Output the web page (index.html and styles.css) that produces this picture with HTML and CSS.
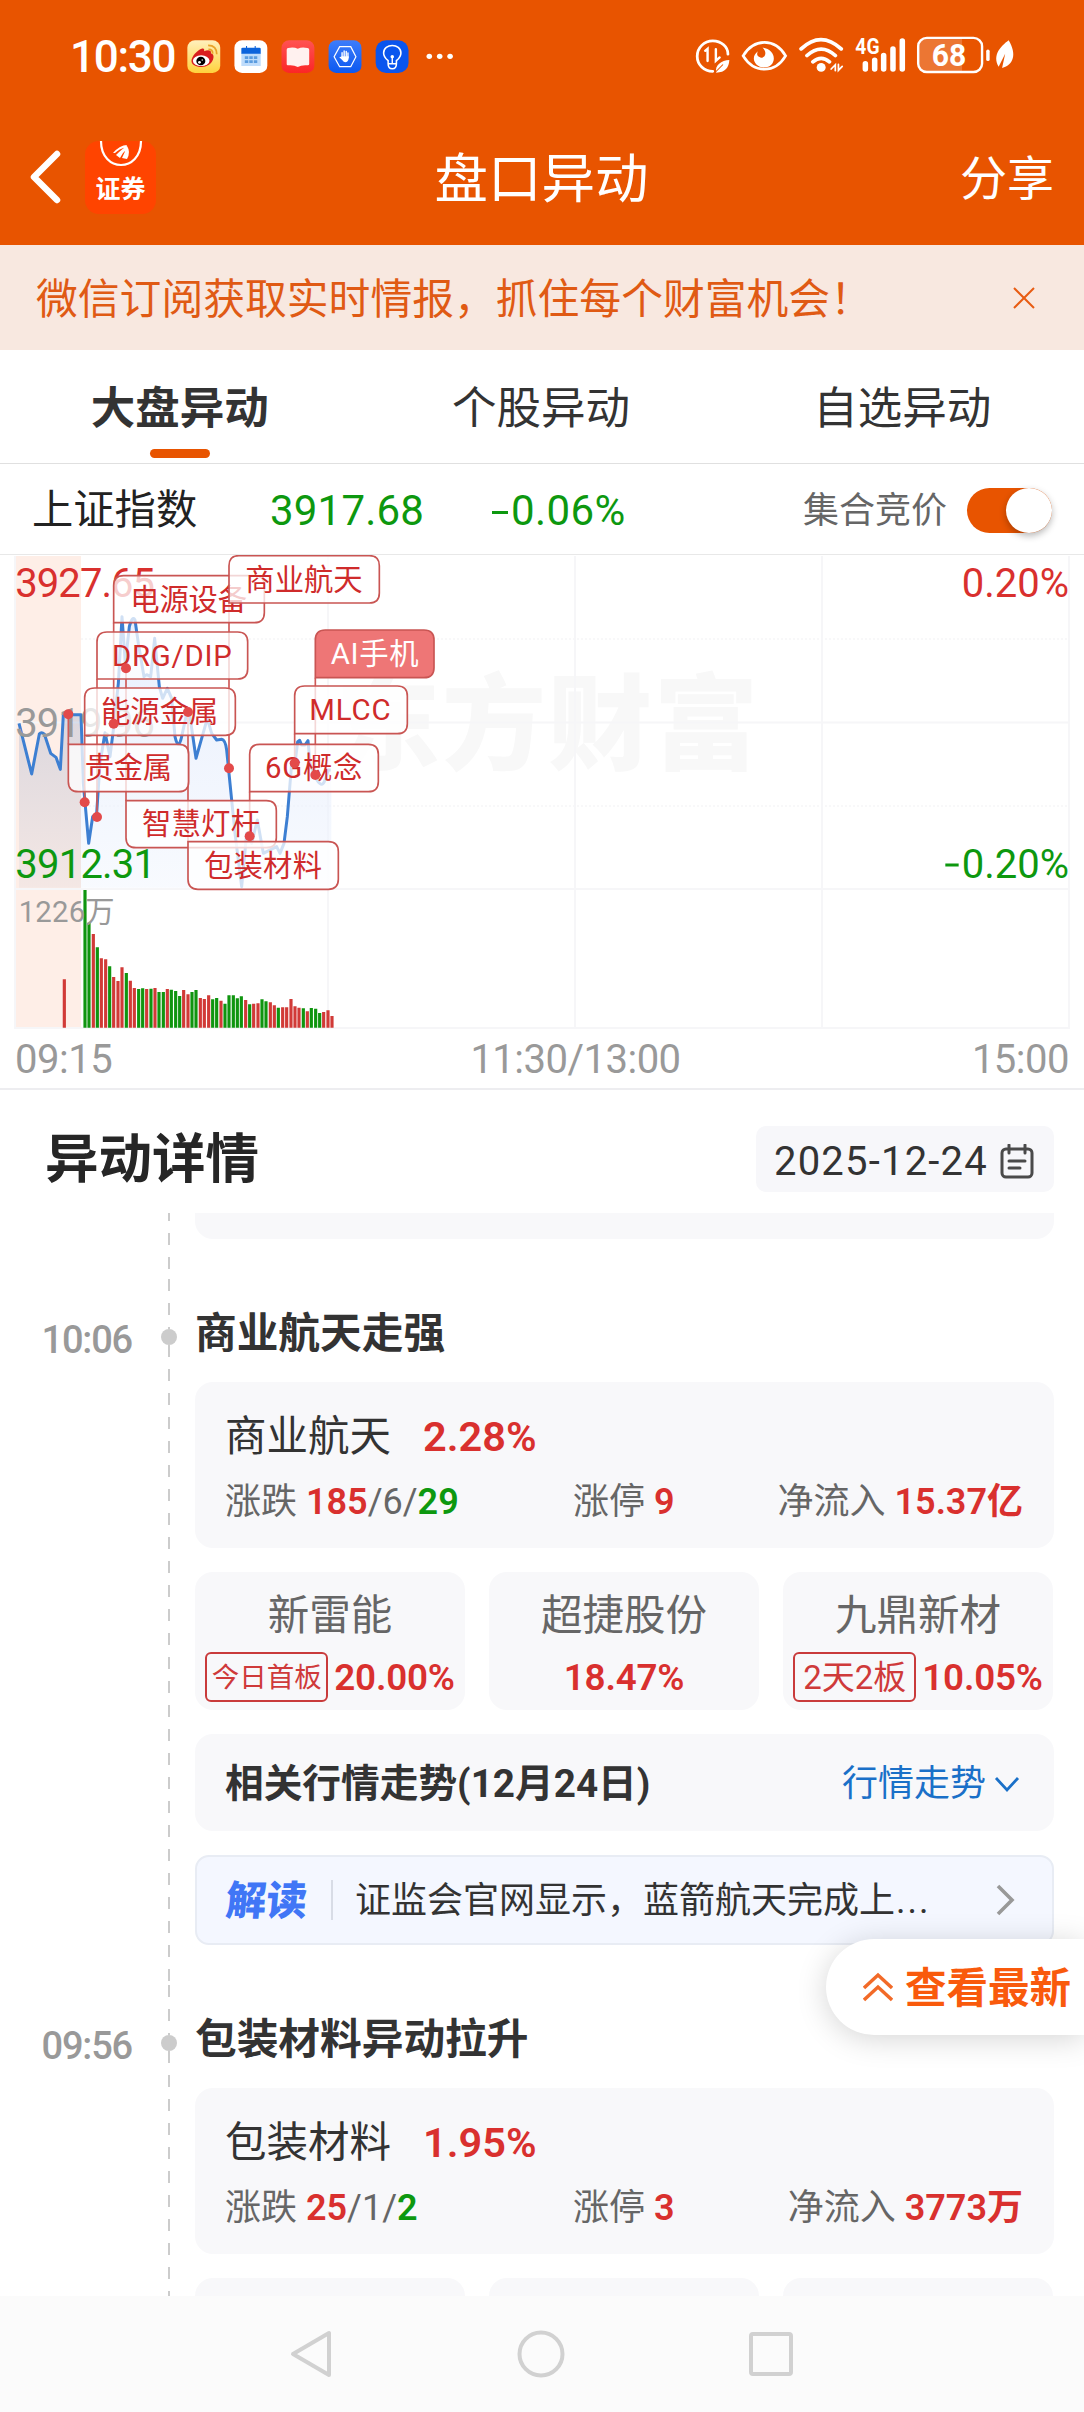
FILE: index.html
```html
<!DOCTYPE html>
<html lang="zh-CN">
<head>
<meta charset="utf-8">
<title>盘口异动</title>
<link rel="stylesheet" href="styles.css">
</head>
<body>
<div class="screen">
  <header class="header">
    <div class="status">
      <span class="clock">10:30</span>
      <svg class="apps" viewBox="540 110 780 120" preserveAspectRatio="none">
        <defs>
          <linearGradient id="gy" x2="0" y2="1"><stop stop-color="#fff0bd"/><stop offset="1" stop-color="#ffd23c"/></linearGradient>
          <linearGradient id="gr" x2="0" y2="1"><stop stop-color="#ff5252"/><stop offset="1" stop-color="#fb2626"/></linearGradient>
          <linearGradient id="gb" x2="0" y2="1"><stop stop-color="#3d7dfb"/><stop offset="1" stop-color="#0c58f0"/></linearGradient>
        </defs>
        <rect x="541" y="120" width="95" height="98" rx="22" fill="url(#gy)"/>
        <path d="M553 182c0-14 16-32 29-37 8-3 9 3 7 8 10-5 23-5 20 6 9 3 9 12 6 19-5 13-18 21-33 22-17 0-29-7-29-18z" fill="#d91e1e"/>
        <ellipse cx="581" cy="181" rx="24" ry="16" fill="#fff"/>
        <circle cx="580" cy="182" r="13" fill="#000"/><circle cx="576" cy="186" r="4" fill="#fff"/><circle cx="584" cy="179" r="2" fill="#fff"/>
        <path d="M601 135q25 0 25 27M602 147q13 0 12 13" fill="none" stroke="#e9a32a" stroke-width="5"/>
        <rect x="677" y="120" width="95" height="98" rx="22" fill="#fff"/>
        <path d="M697 158h56v39h-56z" fill="#bfdcfb"/><path d="M697 145q0-3 4-3h48q4 0 4 3v15h-56z" fill="#0b63dc"/>
        <path d="M712 137v12M737 137v12" stroke="#0b63dc" stroke-width="3"/>
        <path d="M707 168h10v8h-10zm13 0h10v8h-10zm13 0h10v8h-10zM707 180h10v8h-10zm13 0h10v8h-10zm13 0h10v8h-10z" fill="#5b9cdf"/>
        <rect x="813" y="120" width="95" height="98" rx="22" fill="url(#gr)"/>
        <path d="M828 148q0-5 4-5 16-4 28 2 12-6 28-2 5 0 5 5v43q0 4-4 4-18-2-29 5-11-7-29-5-3 0-3-4z" fill="#fff1ef"/>
        <rect x="949" y="120" width="95" height="98" rx="22" fill="url(#gb)"/>
        <path d="M981 139h32l15 30-15 30h-32l-16-30z" fill="none" stroke="#fff" stroke-width="3.5"/>
        <path d="M988 170v-13M994 168v-16M1000 168v-15M1005 172v-14" stroke="#fff" stroke-width="4" stroke-linecap="round"/>
        <path d="M986 168h21q1 17-9 18-6 0-9-6l-9-9q3-3 6 0z" fill="#fff"/>
        <rect x="1085" y="120" width="95" height="98" rx="30" fill="#0a55ee"/>
        <path d="M1121 190v-9c-6-5-13-12-13-23 0-30 50-30 50 0 0 11-7 18-13 23v9q0 15-12 15t-12-15zM1121 190h24" fill="none" stroke="#fff" stroke-width="4.5"/>
        <path d="M1133 188v-16" stroke="#fff" stroke-width="4"/><circle cx="1133" cy="169" r="5" fill="#fff"/>
        <g fill="#fff"><circle cx="1240" cy="168" r="8"/><circle cx="1270" cy="168" r="8"/><circle cx="1300" cy="168" r="8"/></g>
      </svg>
      <svg class="signals" viewBox="430 100 950 130" preserveAspectRatio="none" fill="none" stroke="#fff" stroke-linecap="round">
        <path d="M493 216c-25 0-45-20-45-46s20-46 45-46 44 18 44 40" stroke-width="8"/>
        <path d="M471 154l7-6v37M502 149v35l11-10" stroke-width="7"/>
        <path d="M503 220c-5-22 15-37 38-38-1 22-12 38-38 38z" fill="#fff" stroke="none"/>
        <path d="M501 218l21-22" stroke="#e85400" stroke-width="3"/>
        <path d="M581 169c32-54 92-54 123 0-31 54-91 54-123 0z" stroke-width="8"/>
        <path d="M637 144c15 14 8 34-6 30-11-3-11-13-7-19-24 18-9 49 18 49 35 0 41-52-5-60z" fill="#fff" stroke="none"/>
        <path d="M749 148q57-56 116 0M766 168q41-39 82 0M783 187q24-21 48 0" stroke-width="11"/>
        <circle cx="807" cy="204" r="13" fill="#fff" stroke="none"/>
        <path d="M836 209l12-13v18M857 195v18l11-12" stroke-width="5"/>
        <path d="M935 193v16M962 182v27M988 168v41M1015 148v61M1042 124v85" stroke-width="16"/>
        <text x="906" y="165" class="net" textLength="70" lengthAdjust="spacingAndGlyphs">4G</text>
        <path d="M1089 141q0-23 22-23h104v98h-104q-22 0-22-23z" fill="#fff" fill-opacity=".2" stroke="none"/>
        <rect x="1088" y="115" width="185" height="103" rx="25" stroke-width="7"/>
        <path d="M1290 155v25" stroke-width="10"/>
        <text x="1127" y="201" class="charge" textLength="100" lengthAdjust="spacingAndGlyphs">68</text>
        <path d="M1350 122c-23 18-48 45-29 80l19-39-9 43c34-10 43-42 19-84z" fill="#fff" stroke="none"/>
      </svg>
    </div>
    <div class="titlebar">
      <div class="titlebar-left">
        <svg class="back" width="32" height="54" viewBox="0 0 32 54"><path d="M28 4L5 27l23 23" fill="none" stroke="#fff" stroke-width="6.5" stroke-linecap="round" stroke-linejoin="round"/></svg>
        <div class="appicon">
          <svg width="44" height="27" viewBox="0 0 44 27" fill="none" stroke="#fff"><path d="M2 0c0 32 40 32 40 0" stroke-width="2.200"/><path d="M14 12Q21 4 28 4l-1 2Q20 8 16 12z M17 14Q24 7 28 5l1 2Q24 11 21 17z M23 17Q26 11 28 5q4 6 0 13z" fill="#fff" stroke="none"/></svg>
          <span>证券</span>
        </div>
      </div>
      <h1>盘口异动</h1>
      <span class="share">分享</span>
    </div>
  </header>

  <div class="notice">
    <span>微信订阅获取实时情报，抓住每个财富机会！</span>
    <svg width="22" height="22" viewBox="0 0 22 22"><path d="M1 1l20 20M21 1L1 21" stroke="#e85c13" stroke-width="2"/></svg>
  </div>

  <nav class="tabs">
    <span class="tab active">大盘异动</span>
    <span class="tab">个股异动</span>
    <span class="tab">自选异动</span>
  </nav>

  <div class="index">
    <span class="index-name">上证指数</span>
    <span class="index-value">3917.68</span>
    <span class="index-change"><i class="minus"></i>0.06%</span>
    <span class="auction">集合竞价</span>
    <span class="toggle"></span>
  </div>

  <section class="chart">
    <svg class="plot" viewBox="0 555 1084 475">
      <defs>
        <linearGradient id="area" x2="0" y2="1"><stop stop-color="#d9e4fb"/><stop offset="1" stop-color="#f3f7fe"/></linearGradient>
        <linearGradient id="tint" x2="0" y2="1"><stop stop-color="#6f8fc0" stop-opacity=".24"/><stop offset="1" stop-color="#6f8fc0" stop-opacity=".07"/></linearGradient>
      </defs>
      <text x="336" y="762" class="mark" textLength="422">东方财富</text>
      <path d="M16 556h65v332H16zM16 890h65v138H16z" fill="#feeee7"/>
      <g stroke="#f6f6f8" stroke-width="2" fill="none">
        <path d="M15 556v473M328 556v473M575 556v473M822 556v473M1069 556v473M15 722.500h1054M15 889h1054M15 1028h1054"/>
        <path d="M81 639h988M81 806h988" stroke-dasharray="2 2" stroke-width="1.500"/>
      </g>
      <g transform="translate(0 550) scale(.33333)">
        <path d="M57 520L95 672 122 548 133 552 152 610 168 622 181 658 190 494H243V1013H57z" fill="url(#tint)"/>
        <path d="M243 494L250 700 266 880 278 800 290 790 300 640 315 548 330 620 340 540 355 400 366 200 376 340 388 230 398 205 405 210 415 280 432 380 452 380 464 265 478 410 488 445 502 415 515 445 525 560 535 590 545 560 560 490 570 500 588 625 622 505 635 550 650 570 665 568 680 600 690 700 705 850 725 1010 740 850 755 880 772 810 790 910 830 890 840 910 852 880 862 800 875 640 885 640 893 575 905 580 924 572 930 640 945 680 965 705 975 690 985 660H994V1013H243z" fill="url(#area)" fill-opacity=".6"/>
        <path d="M57 520L95 672 118 552Q124 544 133 552L152 610 168 622 181 658 190 494H243L250 700 266 880 278 800 290 790 300 640 315 548 330 620 340 540 355 400 366 200 376 340 388 230Q397 195 405 210L415 280 432 380 440 374 452 380 464 265 478 410 488 445 502 415 515 445 525 560Q535 605 545 560L560 490 570 500 588 625 622 505 635 550 650 570 665 568Q676 570 680 600L690 700 705 850 725 1010 740 850 755 880 772 810 790 910 830 890 840 910 852 880 862 800 875 640 885 640 893 575 899 571 905 585 915 585 924 572 930 640 945 680Q965 720 975 690L985 660H992" fill="none" stroke="#3d7fd2" stroke-width="9" stroke-linejoin="round"/>
        <g stroke-width="9.500" fill="none">
          <path class="up" d="M193 1433V1288M280 1433V1152M304 1433V1225M317 1433V1228M341 1433V1281M354 1433V1293M366 1433V1252M391 1433V1292M403 1433V1314M440 1433V1317M465 1433V1314M502 1433V1317M551 1433V1320M564 1433V1333M601 1433V1344M613 1433V1347M626 1433V1336M663 1433V1352M737 1433V1350M761 1433V1361M774 1433V1360M811 1433V1357M823 1433V1366M848 1433V1372M860 1433V1372M873 1433V1347M885 1433V1369M897 1433V1373M922 1433V1384M971 1433V1386M984 1433V1381M996 1433V1398"/>
          <path class="down" d="M255 1433V1020M267 1433V1118M292 1433V1192M329 1433V1249M379 1433V1269M416 1433V1317M428 1433V1315M453 1433V1316M477 1433V1326M490 1433V1326M514 1433V1319M527 1433V1323M539 1433V1338M576 1433V1326M588 1433V1320M638 1433V1348M650 1433V1344M675 1433V1361M687 1433V1336M700 1433V1336M712 1433V1345M724 1433V1339M749 1433V1363M786 1433V1348M798 1433V1354M835 1433V1373M910 1433V1375M934 1433V1374M947 1433V1376M959 1433V1389"/>
        </g>
        <g class="axis">
          <text x="46" y="142" class="red" textLength="419">3927.65</text>
          <text x="46" y="560" class="gray" textLength="419">3919.96</text>
          <text x="46" y="983" class="green" textLength="422">3912.31</text>
          <text x="56" y="1115" class="vol" textLength="288">1226万</text>
          <text x="3207" y="142" class="red" text-anchor="end">0.20%</text>
          <text x="3207" y="983" class="green" text-anchor="end">0.20%</text>
          <path d="M2836 945h40" stroke="#0d980f" stroke-width="9"/>
        </g>
        <path class="poles" d="M687 159V655M341 218V521M291 387V801M254 556V757M205 493V583M946 383V675M884 551V640M749 725V859M378 355V752M564 486V875"/>
        <g class="flags">
          <path d="M341 218V107q0-30 30-30h392q30 0 30 30v81q0 30-30 30z"/><text x="391" y="179" textLength="350">电源设备</text>
          <path d="M687 159V47q0-30 30-30h391q30 0 30 30v82q0 30-30 30z"/><text x="736" y="119" textLength="352">商业航天</text>
          <path d="M291 387V276q0-30 30-30h392q30 0 30 30v81q0 30-30 30z"/><text x="336" y="347" textLength="359">DRG/DIP</text>
          <path d="M254 556V444q0-30 30-30h392q30 0 30 30v82q0 30-30 30z"/><text x="303" y="516" textLength="352">能源金属</text>
          <path d="M205 583h331q30 0 30 30v82q0 30-30 30H235q-30 0-30-30z"/><text x="254" y="684" textLength="262">贵金属</text>
          <path d="M946 383V270q0-30 30-30h296q30 0 30 30v83q0 30-30 30z" class="hot"/><text x="992" y="342" class="hot-text" textLength="264">AI手机</text>
          <path d="M884 551V438q0-30 30-30h278q30 0 30 30v83q0 30-30 30z"/><text x="928" y="510" textLength="244">MLCC</text>
          <path d="M749 725V613q0-30 30-30h326q30 0 30 30v82q0 30-30 30z"/><text x="795" y="684" textLength="292">6G概念</text>
          <path d="M378 752h421q30 0 30 30v81q0 30-30 30H408q-30 0-30-30z"/><text x="426" y="852" textLength="354">智慧灯杆</text>
          <path d="M564 875h421q30 0 30 30v83q0 30-30 30H594q-30 0-30-30z"/><text x="612" y="977" textLength="354">包装材料</text>
        </g>
        <g fill="#e34a4a"><circle cx="687" cy="655" r="15"/><circle cx="341" cy="521" r="15"/><circle cx="291" cy="801" r="15"/><circle cx="254" cy="757" r="15"/><circle cx="205" cy="493" r="15"/><circle cx="946" cy="675" r="15"/><circle cx="884" cy="640" r="15"/><circle cx="749" cy="859" r="15"/><circle cx="378" cy="355" r="15"/><circle cx="564" cy="486" r="15"/></g>
      </g>
    </svg>
    <div class="times"><span>09:15</span><span class="noon">11:30/13:00</span><span>15:00</span></div>
  </section>

  <div class="detail-head">
    <h2>异动详情</h2>
    <div class="date">
      <span>2025-12-24</span>
      <svg width="34" height="36" viewBox="0 0 34 36" fill="none" stroke="#4a4a4a" stroke-width="3" stroke-linecap="round"><rect x="2" y="5" width="30" height="28" rx="4"/><path d="M9 1v8M25 1v8M9 17h16M9 24h11"/></svg>
    </div>
  </div>

  <main class="feed">
    <article class="item previous">
      <div class="axis-col"><div class="dash"></div></div>
      <div class="content"><div class="card tail"></div></div>
    </article>

    <article class="item">
      <time>10:06</time>
      <div class="axis-col"><div class="dash first"></div><i class="node"></i><div class="dash rest"></div></div>
      <div class="content">
        <h3>商业航天走强</h3>
        <div class="card sector">
          <div class="sector-name">商业航天<b>2.28%</b></div>
          <div class="stats">
            <span>涨跌 <b>185</b>/6/<b class="fall">29</b></span>
            <span class="limit">涨停 <b>9</b></span>
            <span class="flow">净流入 <b>15.37亿</b></span>
          </div>
        </div>
        <div class="stocks">
          <div class="card stock"><span>新雷能</span><div><em class="small">今日首板</em><b>20.00%</b></div></div>
          <div class="card stock"><span>超捷股份</span><div><b>18.47%</b></div></div>
          <div class="card stock"><span>九鼎新材</span><div><em>2天2板</em><b>10.05%</b></div></div>
        </div>
        <div class="card trend">
          <strong>相关行情走势(12月24日)</strong>
          <span>行情走势<svg width="26" height="17" viewBox="0 0 26 17"><path d="M2 2l11 12L24 2" fill="none" stroke="#1a70c8" stroke-width="2.800"/></svg></span>
        </div>
        <div class="insight">
          <strong>解读</strong>
          <p>证监会官网显示，蓝箭航天完成上<span class="dots">...</span></p>
          <svg width="20" height="32" viewBox="0 0 20 32"><path d="M2 2l14 14L2 30" fill="none" stroke="#999" stroke-width="3.600"/></svg>
        </div>
      </div>
    </article>

    <article class="item">
      <time>09:56</time>
      <div class="axis-col"><div class="dash first"></div><i class="node"></i><div class="dash rest"></div></div>
      <div class="content">
        <h3>包装材料异动拉升</h3>
        <div class="card sector">
          <div class="sector-name">包装材料<b>1.95%</b></div>
          <div class="stats">
            <span>涨跌 <b>25</b>/1/<b class="fall">2</b></span>
            <span class="limit">涨停 <b>3</b></span>
            <span class="flow">净流入 <b>3773万</b></span>
          </div>
        </div>
        <div class="stocks"><div class="card stock"></div><div class="card stock"></div><div class="card stock"></div></div>
      </div>
    </article>
  </main>

  <div class="latest">
    <svg width="30" height="30" viewBox="0 0 30 30" fill="none" stroke="#f26a28" stroke-width="3.400"><path d="M1 16L15 3l14 13M1 28l14-13 14 13"/></svg>
    <span>查看最新</span>
  </div>

  <footer class="navbar">
    <svg width="44" height="50" viewBox="0 0 44 50"><path d="M40 4v42L4 25z"/></svg>
    <svg width="48" height="50" viewBox="0 0 48 50"><circle cx="24" cy="25" r="21.500"/></svg>
    <svg width="44" height="50" viewBox="0 0 44 50"><rect x="2" y="5" width="40" height="40" rx="2"/></svg>
  </footer>
</div>
</body>
</html>
```
FILE: styles.css
```css
* { box-sizing: border-box; margin: 0; padding: 0; }
body { background: #fff; font-family: Roboto, "Noto Sans CJK SC", sans-serif; color: #333; }
.screen { position: relative; width: 1084px; height: 2412px; overflow: hidden; display: flex; flex-direction: column; line-height: 1; white-space: nowrap; }
svg { display: block; flex: none; }
i, em { font-style: normal; }

.header { height: 245px; background: #e85400; color: #fff; flex: none; }
.status { display: flex; align-items: flex-start; height: 112px; padding: 33px 0 0 70px; }
.clock { width: 117px; padding-top: 0; font-size: 44px; font-weight: 500; letter-spacing: -1.300px; line-height: 48px; }
.apps { width: 270px; height: 40px; margin-top: 4px; }
.signals { width: 328px; height: 43px; margin-left: 234px; }
.net { font: 700 66px Roboto, sans-serif; fill: #fff; stroke: none; }
.charge { font: 700 96px Roboto, sans-serif; fill: #fff; stroke: none; }
.titlebar { display: grid; grid-template-columns: 1fr auto 1fr; align-items: center; height: 130px; padding: 0 30px 0 29px; }
.titlebar-left { display: flex; align-items: center; gap: 24px; }
.titlebar h1 { padding-top: 5px; font-size: 53.500px; font-weight: 400; }
.appicon { display: flex; flex-direction: column; align-items: center; width: 71px; height: 73px; border-radius: 14px; background: #ff4400; }
.appicon span { margin-top: 4px; font: 700 25px/30px "Noto Sans CJK SC", sans-serif; }
.share { justify-self: end; padding-top: 3px; font-size: 47px; }

.notice { display: flex; justify-content: space-between; align-items: center; height: 105px; flex: none; padding: 0 49px 0 36px; background: #f8e8e0; color: #e05a14; font-size: 41.800px; }
.notice span { padding-top: 4px; }

.tabs { display: grid; grid-template-columns: repeat(3, 1fr); height: 114px; flex: none; border-bottom: 1px solid #e0e0e0; }
.tab { display: flex; flex-direction: column; align-items: center; padding: 36px 2px 0 0; font-size: 44.500px; line-height: 46px; }
.active { font-weight: 700; }
.active::after { content: ""; width: 60px; height: 9px; margin-top: 17px; border-radius: 5px; background: #e85400; }

.index { display: flex; align-items: center; height: 91px; flex: none; padding: 2px 32px 0; border-bottom: 1px solid #e8e8e8; font-size: 42px; color: #222; }
.index-name { width: 238px; padding-top: 2px; font-size: 41.300px; }
.index-value { width: 221px; padding-top: 2px; color: #0d980f; letter-spacing: .2px; }
.index-change { display: flex; align-items: center; width: 312px; padding-top: 2px; color: #0d980f; letter-spacing: .4px; }
.minus { width: 16px; height: 3px; margin: 3px 3px 0 1px; background: currentColor; }
.auction { width: 164px; padding-top: 2px; font-size: 36px; color: #666; }
.toggle { display: flex; justify-content: flex-end; width: 85px; height: 45px; border-radius: 23px; background: #e85400; }
.toggle::after { content: ""; width: 46px; height: 45px; border-radius: 50%; background: #fff; box-shadow: 0 3px 7px rgba(0,0,0,.28); }

.chart { height: 535px; flex: none; border-bottom: 2px solid #ededf0; }
.plot { width: 1084px; height: 475px; }
.mark { font: 900 104px "Noto Sans CJK SC", sans-serif; fill: #f8f8f8; }
.up { stroke: #d13a37; }
.down { stroke: #0f950f; }
.axis { font: 120px Roboto, "Noto Sans CJK SC", sans-serif; }
.red { fill: #d9302e; }
.gray { fill: #999; }
.green { fill: #0d980f; }
.vol { font-size: 88px; fill: #999; }
.poles { fill: none; stroke: #cf5a58; stroke-width: 5; }
.flags { font: 88px Roboto, "Noto Sans CJK SC", sans-serif; fill: #cf2b2b; }
.flags path { fill: #fff; fill-opacity: .76; stroke: #c95553; stroke-width: 5; }
.flags .hot { fill: #ee7676; fill-opacity: 1; }
.flags .hot-text { fill: #fff; }
.times { display: grid; grid-template-columns: 1fr auto 1fr; padding: 8px 15px 0; font-size: 40px; letter-spacing: -.500px; line-height: 44px; color: #999; }
.times span:last-child { text-align: right; }
.noon { padding-left: 67px; }

.detail-head { display: flex; justify-content: space-between; align-items: flex-start; height: 123px; flex: none; padding: 36px 30px 0 45px; }
.detail-head h2 { padding-top: 7px; font-size: 53.500px; color: #262626; }
.date { display: flex; align-items: center; justify-content: space-between; width: 298px; height: 66px; padding: 5px 20px 0 18px; border-radius: 10px; background: #f7f7fa; font-size: 40px; letter-spacing: 1.200px; }

.feed { height: 1083px; flex: none; overflow: hidden; }
.item { display: grid; grid-template-columns: 132px 63px 859px; height: 706px; }
.item time { padding-top: 39px; text-align: right; font-size: 38px; line-height: 44px; color: #999; font-weight: 500; letter-spacing: -1.200px; }
.axis-col { grid-column: 2; display: flex; flex-direction: column; align-items: center; margin-left: 11px; width: 52px; }
.dash { width: 2px; flex: 1; background: repeating-linear-gradient(#ccc 0 12px, transparent 12px 24px); }
.dash.first { flex: none; height: 50px; }
.node { flex: none; width: 16px; height: 16px; border-radius: 50%; background: #ccc; }
.previous { height: 66px; }
.previous .dash { margin-bottom: 10px; background-position: 0 -4px; background-size: 2px 24px; background-image: linear-gradient(#ccc 12px, transparent 12px); }
.content { grid-column: 3; }
.card { border-radius: 18px; background: #f8f8fa; }
.tail { height: 26px; border-radius: 0 0 18px 18px; }
.content h3 { height: 103px; padding-top: 31px; font-size: 41.700px; line-height: 48px; }
.sector { height: 166px; padding: 30px 31px 0 30px; }
.sector-name { display: flex; align-items: center; gap: 32px; height: 48px; padding-top: 1px; font-size: 41.500px; }
.sector b { color: #d9302e; font-weight: 600; }
.stats { display: grid; grid-template-columns: 348px 1fr auto; margin-top: 20px; font-size: 36px; line-height: 44px; color: #666; }
.sector .fall { color: #0d980f; }
.stocks { display: grid; grid-template-columns: repeat(3, 270px); gap: 24px; margin-top: 24px; }
.stock { height: 138px; padding-top: 20px; text-align: center; font-size: 41.500px; line-height: 48px; color: #666; }
.stock div { display: flex; align-items: center; justify-content: center; gap: 6px; height: 50px; margin-top: 12px; }
.stock b { padding-top: 2px; font-size: 36.800px; font-weight: 600; color: #d9302e; letter-spacing: -.200px; }
.stock em { width: 123px; height: 50px; border: 2px solid #c93b3b; border-radius: 6px; color: #cf3a3a; font-size: 33px; line-height: 48px; }
.stock em.small { font-size: 27.500px; }
.trend { display: flex; align-items: center; justify-content: space-between; height: 97px; margin-top: 24px; padding: 3px 34px 0 30px; font-size: 38.700px; }
.trend span { display: flex; align-items: center; gap: 8px; font-size: 36px; color: #1a70c8; }
.insight { display: flex; align-items: center; height: 90px; margin-top: 24px; padding: 0 36px 0 29px; border: 2px solid #e8ecf4; border-radius: 14px; background: #f4f7ff; font-size: 36px; }
.insight strong { width: 105px; padding-top: 2px; font-weight: 900; font-size: 40.500px; color: #4076f6; transform: skewX(-5deg); }
.insight p { flex: 1; padding: 3px 0 1px 22px; line-height: 36px; border-left: 2px solid #d8dce6; }
.dots { letter-spacing: 2px; margin-left: 1px; }

.latest { position: absolute; right: 0; top: 1939px; display: flex; align-items: center; gap: 12px; width: 258px; height: 96px; padding-left: 37px; border-radius: 48px 0 0 48px; background: #fff; box-shadow: 0 4px 30px rgba(0,0,0,.17); font-size: 41.500px; font-weight: 700; color: #f95a0c; }
.latest span { padding-top: 3px; }

.navbar { display: flex; justify-content: center; gap: 184px; height: 116px; flex: none; padding: 33px 2px 0 0; background: #fbfbfb; }
.navbar svg { fill: none; stroke: #d1d1d1; stroke-width: 4; stroke-linejoin: round; }
```
